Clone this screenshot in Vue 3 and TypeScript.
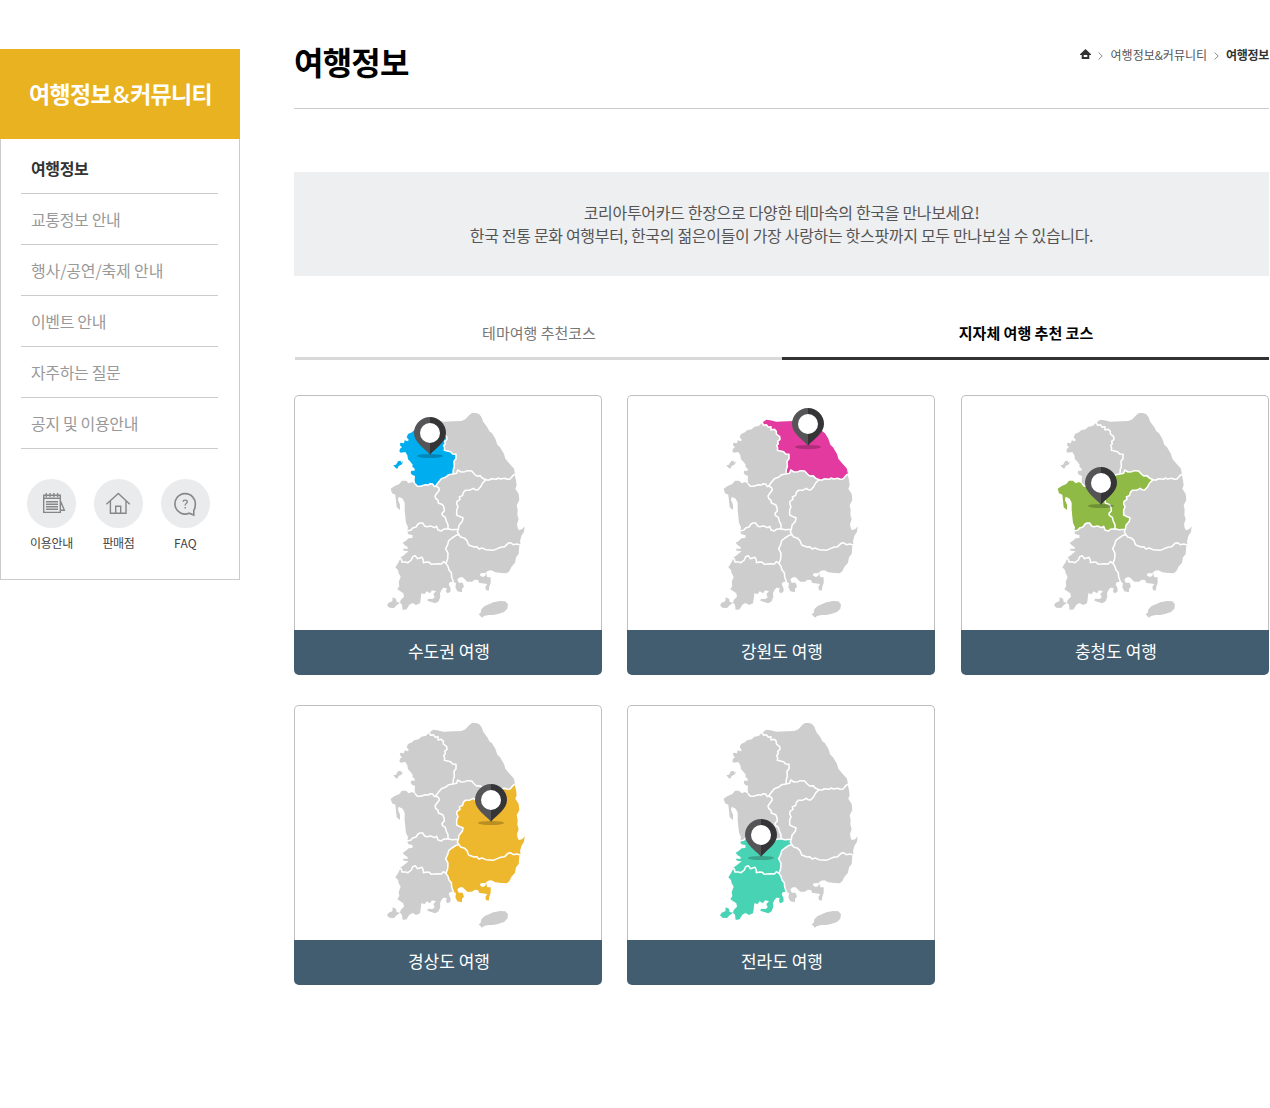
<script setup lang="ts">
type Point = [number, number]
type RegionId = 'gyeonggi' | 'gangwon' | 'chungnam' | 'chungbuk' | 'gyeongbuk' | 'gyeongnam' | 'jeonbuk' | 'jeonnam'

interface Card {
  title: string
  color: string
  regions: RegionId[]
  pin: Point
}

const pts = (s: string): Point[] => s.trim().split(/\s+/).map((p) => p.split(',').map(Number) as Point)
const rev = (p: Point[]): Point[] => [...p].reverse()
const line = (p: Point[]): string => 'M' + p.map((q) => q.join(' ')).join('L')
const area = (...parts: Point[][]): string => line(parts.flat()) + 'Z'

// Borders shared by neighbouring provinces
const b = {
  ggGw: pts('148,68 152,76 160,74 166,82 174,80 174,90 184,88 190,94 190,102 200,110 201,118 194,124 196,132 191,136 194,144 193,151 202,153 212,155 218,162 228,163 228,176 222,184 223,200 220,208 219,222'),
  ggCb: pts('219,222 206,224 198,231 184,236 176,246 167,258'),
  ggCn: pts('167,258 163,260 158,252 150,251 146,255 136,254 122,259 112,259 106,252'),
  gwCb: pts('219,222 230,220 233,210 243,216 255,215 262,212 275,213 283,222 290,228 300,227 308,235 318,239'),
  gwGb: pts('318,239 328,240 334,236 350,238 354,234 362,237 374,235 382,238 390,237 396,230 402,224 410,220'),
  cnCb: pts('167,258 176,263 178,270 171,279 165,288 167,295 174,301 175,309 188,314 192,323 193,333 186,340 187,346 196,352 199,364 204,374 204,386'),
  cbGb: pts('318,239 308,249 302,260 293,270 285,269 280,265 268,271 256,271 250,277 248,286 238,291 240,298 231,304 230,312 234,320 230,330 230,345 240,350 249,353 247,364 237,376 235,388'),
  cnJb: pts('82,392 92,391 98,384 108,381 114,372 120,369 128,369 134,378 140,380 152,378 164,383 170,379 174,390 184,393 190,388 204,386'),
  cbJb: pts('204,386 216,389 235,388'),
  jbGb: pts('235,388 232,396 237,404'),
  gbGn: pts('237,404 242,411 254,415 261,422 266,435 282,441 290,440 297,447 306,444 318,449 340,451 352,446 362,442 374,440 384,430 391,428 400,434 410,432 422,435'),
  jbGn: pts('237,404 228,406 216,414 206,422 203,434 197,446 204,460 203,476 198,490'),
  jbJn: pts('56,474 64,477 66,486 76,486 84,488 94,480 98,470 106,467 112,476 126,472 130,480 130,488 140,486 148,487 154,493 172,491 184,492 190,485 198,490'),
  jnGn: pts('198,490 204,499 207,510 214,518 215,531 220,545'),
}

// Coastlines
const c = {
  gg: pts('106,252 104,240 105,228 96,224 92,218 94,212 104,212 104,206 97,200 98,194 90,184 84,178 82,166 76,156 62,158 58,154 60,146 66,142 60,136 61,128 72,130 74,121 84,124 86,119 80,112 84,102 96,97 102,91 116,88 124,80 137,78'),
  gw: pts('150,66 160,59 172,61 190,65 222,64 244,63 256,58 268,45 276,39 288,39 297,42 304,50 310,66 322,82 328,94 336,100 346,116 352,134 360,142 372,162 376,176 386,188 402,206 404,218'),
  cn: pts('106,252 96,246 86,250 78,242 66,242 58,252 44,258 32,266 36,280 46,284 48,302 50,322 60,330 60,314 54,300 56,290 68,296 74,308 74,330 76,350 78,368 84,382'),
  gb: pts('404,224 408,240 410,256 406,266 416,282 418,300 410,316 413,330 412,344 416,358 411,372 413,384 417,391 427,387 434,379 432,395 424,408 420,424'),
  gn: pts('418,437 416,462 408,472 405,488 394,501 388,514 380,520 364,519 346,517 334,511 324,512 316,519 302,520 299,526 308,531 316,528 318,518 322,532 332,532 332,548 328,560 326,572 318,570 316,561 322,552 306,550 298,549 294,540 284,539 276,545 262,545 254,538 248,532 240,532 232,538 236,548 248,548 252,560 246,566 246,577 232,574 226,562 228,550 222,546'),
  jb: pts('82,392 84,402 98,406 97,414 86,415 76,424 68,428 74,436 82,440 84,446 68,446 72,452 86,454 72,465 60,474'),
  jn: pts('220,545 210,546 206,552 212,566 211,576 202,580 198,574 200,564 190,563 184,571 180,580 181,590 176,604 166,610 156,607 142,602 144,596 158,597 164,592 160,582 168,574 156,571 150,580 140,574 134,582 124,580 122,598 120,610 108,615 98,609 88,614 80,628 68,630 66,614 60,608 50,616 42,624 28,623 21,616 26,608 37,604 38,592 48,596 50,606 60,608 62,600 72,590 70,580 52,568 58,558 56,546 62,530 56,520 54,510 46,502 54,490 60,478'),
}

const shapes: Record<RegionId, string> = {
  gyeonggi: area(b.ggGw, b.ggCb, b.ggCn, c.gg) + area(pts('40,196 48,194 54,184 62,182 64,188 69,184 66,193 56,198 52,206 47,204')),
  gangwon: area(c.gw, rev(b.gwGb), rev(b.gwCb), rev(b.ggGw)),
  chungnam: area(rev(b.ggCn), b.cnCb, rev(b.cnJb), rev(c.cn)),
  chungbuk: area(rev(b.ggCb), b.gwCb, b.cbGb, rev(b.cbJb), rev(b.cnCb)),
  gyeongbuk: area(b.gwGb.slice(0, -1), c.gb, rev(b.gbGn), rev(b.jbGb), rev(b.cbGb)),
  gyeongnam: area(b.gbGn, c.gn, rev(b.jnGn), rev(b.jbGn)),
  jeonbuk: area(b.cnJb, b.cbJb, b.jbGb, b.jbGn, rev(b.jbJn), rev(c.jb)),
  jeonnam: area(b.jbJn, b.jnGn, c.jn),
}
const jeju = area(pts('296,643 302,638 304,628 314,618 330,611 340,607 360,603 376,604 384,613 382,626 372,636 354,642 340,645 326,645 312,648 306,653'))
const borders = Object.values(b).map(line).join('')
const regionIds = Object.keys(shapes) as RegionId[]

const menu = ['여행정보', '교통정보 안내', '행사/공연/축제 안내', '이벤트 안내', '자주하는 질문', '공지 및 이용안내']

const cards: Card[] = [
  { title: '수도권 여행', color: '#00aeef', regions: ['gyeonggi'], pin: [150, 99] },
  { title: '강원도 여행', color: '#e23a9f', regions: ['gangwon'], pin: [285, 72] },
  { title: '충청도 여행', color: '#8fba46', regions: ['chungnam', 'chungbuk'], pin: [162, 249] },
  { title: '경상도 여행', color: '#eeb82e', regions: ['gyeongbuk', 'gyeongnam'], pin: [333, 270] },
  { title: '전라도 여행', color: '#48d4b4', regions: ['jeonbuk', 'jeonnam'], pin: [144, 375] },
]
</script>

<template>
  <div class="page">
    <aside class="side">
      <h2 class="side-title">여행정보<span class="amp">&amp;</span>커뮤니티</h2>
      <div class="side-body">
        <ul class="menu">
          <li v-for="(item, i) in menu" :key="item" :class="{ on: i === 0 }">{{ item }}</li>
        </ul>
        <div class="quick">
          <div class="quick-item">
            <span class="circle">
              <svg width="49" height="49" viewBox="0 0 49 49" fill="none" stroke="#858889" stroke-width="1.4">
                <path d="M16.7 16.2H33.3V33.4H16.7ZM16.7 19.3H33.3M19.3 14V18M23 14V18M26.8 14V18M30.6 14V18M19 22.7H31M19 25.2H31M19 27.7H31M19 30.2H31M33.5 22L37.3 31.2H33.5" />
              </svg>
            </span>
            이용안내
          </div>
          <div class="quick-item">
            <span class="circle">
              <svg width="49" height="49" viewBox="0 0 49 49" fill="none" stroke="#858889" stroke-width="1.4">
                <path d="M12.4 25.2L24.3 14.5L35.8 25.2M16.4 22V34.3H32V22M21.7 34V27.3H26.7V34" />
              </svg>
            </span>
            판매점
          </div>
          <div class="quick-item faq">
            <span class="circle">
              <svg width="49" height="49" viewBox="0 0 49 49" fill="none" stroke="#858889" stroke-width="1.6">
                <path d="M34.2 26.5A10.2 10.2 0 1 0 28.2 34.2L32.8 36V31.2Q34.2 29.5 34.2 26.5Z" />
                <path d="M22.2 22.7Q22.2 21.1 24.2 21.1Q26.2 21.1 26.2 22.7Q26.2 23.8 25.2 24.5Q24.2 25.1 24.2 26.6M24.2 28V29.6" stroke-width="1.4" />
              </svg>
            </span>
            FAQ
          </div>
        </div>
      </div>
    </aside>

    <main class="content">
      <header class="head">
        <h1>여행정보</h1>
        <nav class="crumbs">
          <svg class="home" width="11" height="10" viewBox="0 0 11 10"><path fill="#333" fill-rule="evenodd" d="M5.5 0L11 5.2V6H9.3V10H1.7V6H0V5.2ZM3.7 6V8H7.3V6Z" /></svg>
          <svg class="arrow" width="5" height="8" viewBox="0 0 5 8"><path d="M.6 .5L4.2 4L.6 7.5" fill="none" stroke="#888" /></svg>
          <span>여행정보&amp;커뮤니티</span>
          <svg class="arrow second" width="5" height="8" viewBox="0 0 5 8"><path d="M.6 .5L4.2 4L.6 7.5" fill="none" stroke="#888" /></svg>
          <strong>여행정보</strong>
        </nav>
      </header>

      <p class="intro">
        코리아투어카드 한장으로 다양한 테마속의 한국을 만나보세요!<br />
        <span>한국 전통 문화 여행부터, 한국의 젊은이들이 가장 사랑하는 핫스팟까지 모두 만나보실 수 있습니다.</span>
      </p>

      <div class="tabs">
        <div class="tab">테마여행 추천코스</div>
        <div class="tab active">지자체 여행 추천 코스</div>
      </div>

      <div class="cards">
        <article v-for="card in cards" :key="card.title" class="card">
          <div class="map">
            <svg width="155" height="225" viewBox="0 0 465 675">
              <path v-for="id in regionIds" :key="id" :d="shapes[id]" :fill="card.regions.includes(id) ? card.color : '#cdcdcd'" />
              <path :d="jeju" fill="#cdcdcd" />
              <path :d="borders" fill="none" stroke="#fff" stroke-width="4.6" stroke-linejoin="round" stroke-linecap="round" />
              <g :transform="`translate(${card.pin[0]} ${card.pin[1]})`">
                <ellipse cx="0" cy="69" rx="39" ry="6" fill="#000" fill-opacity=".22" />
                <path d="M0 -48A48 48 0 0 0 -48 0C-48 28 -18 44 0 65Z" fill="#555456" />
                <path d="M0 -48A48 48 0 0 1 48 0C48 28 18 44 0 65Z" fill="#353436" />
                <circle r="30" fill="#fff" />
              </g>
            </svg>
          </div>
          <h3>{{ card.title }}</h3>
        </article>
      </div>
    </main>
  </div>
</template>

<style>
body {
  margin: 0;
  background: #fff;
}
</style>

<style scoped>
.page {
  display: flex;
  align-items: flex-start;
  width: 1270px;
  height: 1108px;
  font-family: "Noto Sans CJK KR", "Noto Sans", sans-serif;
  color: #555;
}
h1, h2, h3, p, ul {
  margin: 0;
  padding: 0;
}
.side {
  width: 240px;
  margin-top: 49px;
}
.side-title {
  height: 90px;
  line-height: 88px;
  background: #e9b221;
  color: #fff;
  text-align: center;
  font-size: 23px;
  letter-spacing: -0.7px;
  text-indent: 1px;
}
.amp {
  margin: 0 1px 0 2px;
  font-family: "Noto Sans", sans-serif;
  font-size: 23px;
  font-weight: 500;
}
.side-body {
  box-sizing: border-box;
  height: 441px;
  padding: 4px 20px 0;
  border: 1px solid #ccc;
  border-top: 0;
}
.menu {
  width: 197px;
  list-style: none;
}
.menu li {
  box-sizing: border-box;
  height: 51px;
  line-height: 50px;
  padding-left: 10px;
  border-bottom: 1px solid #ccc;
  font-size: 16px;
  letter-spacing: -0.35px;
  color: #999;
}
.menu li:nth-child(3) {
  letter-spacing: -0.15px;
}
.menu .on {
  color: #333;
  font-weight: 700;
}
.quick {
  display: flex;
  gap: 18px;
  margin: 30px 0 0 6px;
}
.quick-item {
  width: 49px;
  text-align: center;
  white-space: nowrap;
  font-size: 12px;
  line-height: 29px;
  letter-spacing: -0.3px;
  color: #444;
}
.faq {
  letter-spacing: 0.2px;
}
.circle {
  display: block;
  height: 49px;
  border-radius: 50%;
  background: #e9ebec;
}
.circle svg {
  display: block;
}
.content {
  width: 975px;
  margin-left: 54px;
}
.head {
  box-sizing: border-box;
  display: flex;
  justify-content: space-between;
  height: 109px;
  border-bottom: 1px solid #ccc;
}
.head h1 {
  margin-top: 37px;
  line-height: 48px;
  font-size: 32px;
  letter-spacing: -0.8px;
  color: #000;
}
.crumbs {
  display: flex;
  align-items: center;
  height: 20px;
  margin-top: 44px;
  font-size: 12px;
  color: #555;
}
.crumbs strong {
  color: #333;
  letter-spacing: -0.3px;
}
.arrow {
  margin: 3px 8px 0 7px;
}
.second {
  margin: 3px 7px 0;
}
.intro {
  box-sizing: border-box;
  height: 104px;
  margin-top: 63px;
  padding-top: 29px;
  background: #eeeff1;
  text-align: center;
  font-size: 16px;
  line-height: 23px;
  letter-spacing: -0.32px;
  color: #555;
}
.tabs {
  display: flex;
  margin: 34px 0 0 1px;
}
.tab {
  box-sizing: border-box;
  width: 487px;
  height: 50px;
  padding-left: 1px;
  border-bottom: 3px solid #d9d9d9;
  line-height: 46px;
  text-align: center;
  font-size: 15px;
  color: #777;
}
.tab.active {
  border-color: #333;
  color: #000;
  font-weight: 700;
}
.cards {
  display: grid;
  grid-template-columns: 333px 334px 308px;
  row-gap: 30px;
  margin-top: 35px;
}
.card {
  width: 308px;
  height: 280px;
}
.map {
  box-sizing: border-box;
  height: 235px;
  padding: 4px 0 0 85px;
  border: 1px solid #bfbfbf;
  border-bottom: 0;
  border-radius: 5px 5px 0 0;
}
.map svg {
  display: block;
}
.card h3 {
  height: 45px;
  padding-left: 2px;
  line-height: 42px;
  border-radius: 0 0 5px 5px;
  background: #425d70;
  color: #fff;
  text-align: center;
  font-size: 17px;
  font-weight: 400;
}
</style>
